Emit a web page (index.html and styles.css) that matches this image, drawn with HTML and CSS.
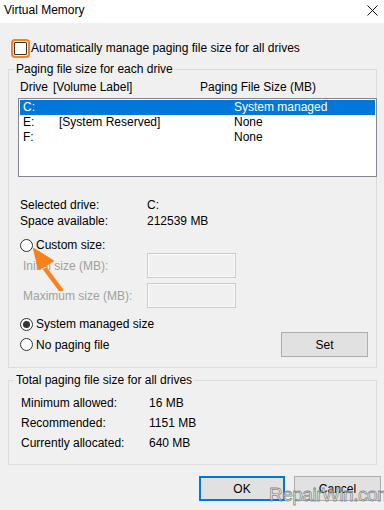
FILE: index.html
```html
<!DOCTYPE html>
<html>
<head>
<meta charset="utf-8">
<link rel="stylesheet" href="styles.css">
</head>
<body>
<div class="window">
  <div class="titlebar">
    <span class="title">Virtual Memory</span>
    <svg class="close" width="11" height="11" viewBox="0 0 11 11"><path d="M0.5 0.5L10.5 10.5M10.5 0.5L0.5 10.5" stroke="#111" stroke-width="1" fill="none"/></svg>
  </div>
  <div class="content">
    <div class="auto-row">
      <span class="checkbox hl"></span>
      <span>Automatically manage paging file size for all drives</span>
    </div>

    <fieldset class="group g1">
      <legend>Paging file size for each drive</legend>
      <div class="list-head">
        <span class="c-drive">Drive</span><span class="c-label">[Volume Label]</span><span class="c-size">Paging File Size (MB)</span>
      </div>
      <div class="listbox">
        <div class="row sel"><span class="r-drive">C:</span><span class="r-label"></span><span class="r-size">System managed</span></div>
        <div class="row"><span class="r-drive">E:</span><span class="r-label">[System Reserved]</span><span class="r-size">None</span></div>
        <div class="row"><span class="r-drive">F:</span><span class="r-label"></span><span class="r-size">None</span></div>
      </div>
      <div class="info">
        <div class="kv"><span class="k">Selected drive:</span><span>C:</span></div>
        <div class="kv"><span class="k">Space available:</span><span>212539 MB</span></div>
      </div>
      <div class="radio-row custom"><span class="radio"></span><span>Custom size:</span></div>
      <div class="field"><span class="flabel">Initial size (MB):</span><span class="input"></span></div>
      <div class="field f2"><span class="flabel">Maximum size (MB):</span><span class="input"></span></div>
      <div class="radio-row sys"><span class="radio on"></span><span>System managed size</span></div>
      <div class="radio-row nopage">
        <div class="rl"><span class="radio"></span><span>No paging file</span></div>
        <button class="btn set">Set</button>
      </div>
    </fieldset>

    <fieldset class="group g2">
      <legend>Total paging file size for all drives</legend>
      <div class="tot"><span class="tk">Minimum allowed:</span><span>16 MB</span></div>
      <div class="tot"><span class="tk">Recommended:</span><span>1151 MB</span></div>
      <div class="tot"><span class="tk">Currently allocated:</span><span>640 MB</span></div>
    </fieldset>

    <div class="buttons">
      <button class="btn ok">OK</button>
      <button class="btn cancel">Cancel</button>
    </div>
  </div>

  <svg class="arrow" width="40" height="45" viewBox="0 0 40 45">
    <path d="M30 44 L15 24" stroke="#f7821e" stroke-width="4.5" stroke-linecap="round" fill="none"/>
    <path d="M3 3 L8 23 L22 15 Z" fill="#f7821e" stroke="#f7821e" stroke-width="2" stroke-linejoin="round"/>
  </svg>
  <div class="watermark">RepairWin.com</div>
</div>
</body>
</html>
```

FILE: styles.css
```css
* { box-sizing: border-box; }
html, body { margin: 0; padding: 0; }
body {
  font-family: "Liberation Sans", Arial, sans-serif;
  font-size: 12px;
  color: #000;
  background: #f0f0f0;
}
.window {
  position: relative;
  width: 384px;
  height: 510px;
  background: #f0f0f0;
  overflow: hidden;
}
.titlebar {
  height: 23px;
  background: #fff;
  display: flex;
  align-items: center;
  justify-content: space-between;
  padding: 0 6px 4px 4px;
}
.title { font-size: 12px; }
.close { margin-top: 2px; }

.content {
  padding: 0 7px 0 8px;
}
.auto-row {
  display: flex;
  align-items: center;
  height: 16px;
  margin-top: 17px;
}
.checkbox {
  width: 13px;
  height: 13px;
  border: 1px solid #333;
  background: #fff;
  margin-left: 6px;
  margin-right: 4px;
}
.checkbox.hl {
  outline: 2px solid #f7821e;
  outline-offset: 1px;
  border-radius: 1px;
}

.group {
  margin: 5px 0 0 0;
  padding: 0;
  border: 1px solid #dcdcdc;
  min-width: 0;
}
.group legend {
  margin-left: 5px;
  padding: 0 2px;
  line-height: 16px;
  height: 16px;
}
.g1 { padding-bottom: 10px; }

.list-head {
  display: flex;
  line-height: 16px;
  margin-top: 2px;
  padding-left: 11px;
}
.c-drive { width: 33px; }
.c-label { width: 147px; }

.listbox {
  margin: 3px 0 0 9px;
  width: 359px;
  height: 79px;
  border: 1px solid #828790;
  background: #fff;
  padding: 1px 1px 0 1px;
}
.row {
  display: flex;
  height: 15px;
  line-height: 15px;
  padding-left: 3px;
}
.row.sel { background: #0078d7; color: #fff; }
.r-drive { width: 36px; }
.r-label { width: 175px; }

.info { margin-top: 20px; padding-left: 11px; }
.kv { display: flex; line-height: 16px; }
.k { width: 127px; }

.radio-row {
  display: flex;
  align-items: center;
  line-height: 16px;
  padding-left: 11px;
}
.radio {
  width: 13px;
  height: 13px;
  border: 1px solid #333;
  border-radius: 50%;
  background: #fff;
  margin-right: 3px;
  display: flex;
  align-items: center;
  justify-content: center;
}
.radio.on::after {
  content: "";
  width: 7px;
  height: 7px;
  border-radius: 50%;
  background: #333;
}
.custom { margin-top: 8px; }

.field {
  display: flex;
  align-items: center;
  padding-left: 14px;
  color: #a0a0a0;
  height: 25px;
}
.f2 { margin-top: 5px; }
.flabel { width: 124px; }
.input {
  width: 89px;
  height: 25px;
  border: 1px solid #cccccc;
  box-shadow: inset 0 0 0 1px #fafafa;
  background: #f0f0f0;
}
.sys { margin-top: 8px; }
.nopage {
  justify-content: space-between;
  padding-right: 8px;
  height: 25px;
}
.rl { display: flex; align-items: center; }

.btn {
  font-family: inherit;
  font-size: 12px;
  color: #000;
  background: #e1e1e1;
  border: 1px solid #adadad;
  padding: 0;
  margin: 0;
  height: 25px;
}
.set { width: 87px; }

.g2 { margin-top: 4px; padding-bottom: 11px; }
.tot {
  display: flex;
  line-height: 20px;
  padding-left: 12px;
}
.g2 legend + .tot { margin-top: 5px; }
.tk { width: 128px; }

.buttons {
  display: flex;
  justify-content: flex-end;
  gap: 9px;
  margin-top: 11px;
}
.ok { width: 86px; border: 2px solid #0078d7; }
.cancel { width: 87px; margin-right: -4px; }

.arrow {
  position: absolute;
  left: 31px;
  top: 246px;
}
.watermark {
  position: absolute;
  left: 269px;
  top: 484px;
  font-family: "Liberation Sans", Arial, sans-serif;
  font-size: 19px;
  color: rgba(255, 255, 255, 0.55);
  -webkit-text-stroke: 0.8px rgba(120, 120, 120, 0.85);
  letter-spacing: -0.5px;
}
```
